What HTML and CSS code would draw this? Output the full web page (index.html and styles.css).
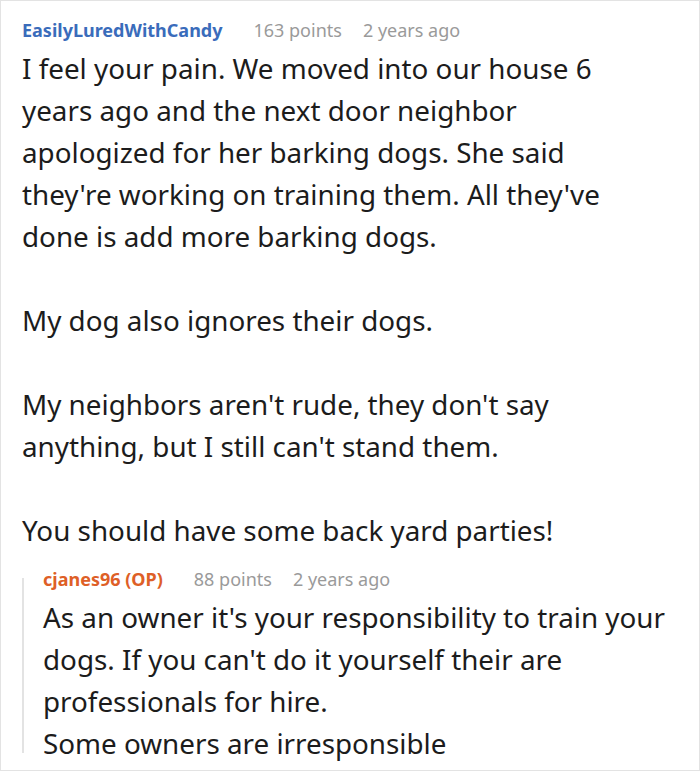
FILE: index.html
```html
<!DOCTYPE html>
<html lang="en">
<head>
  <meta charset="UTF-8" />
  <title>Comments</title>
  <link rel="stylesheet" href="styles.css">
</head>
<body>
  <div class="thread">
    <div class="comment">
      <div class="meta">
        <span class="author">EasilyLuredWithCandy</span>
        <span class="points">163 points</span>
        <span class="age">2 years ago</span>
      </div>
      <div class="body">
        <p>I feel your pain. We moved into our house 6 years ago and the next door neighbor apologized for her barking dogs. She said they're working on training them. All they've done is add more barking dogs.</p>
        <p>My dog also ignores their dogs.</p>
        <p>My neighbors aren't rude, they don't say anything, but I still can't stand them.</p>
        <p>You should have some back yard parties!</p>
      </div>

      <!-- reply from the original poster -->
      <div class="reply">
        <div class="meta">
          <span class="author op">cjanes96 (OP)</span>
          <span class="points">88 points</span>
          <span class="age">2 years ago</span>
        </div>
        <div class="body">
          As an owner it's your responsibility to train your dogs. If you can't do it yourself their are professionals for hire.<br>
          Some owners are irresponsible
        </div>
      </div>
    </div>
  </div>
</body>
</html>
```

FILE: styles.css
```css
:root {
  --border: #e3e3e3;
  --text: #1c1c1c;
  --muted: #9a9a9a;
  --blue: #3a6cbb;
  --orange: #de5f27;
}
*, *::before, *::after { box-sizing: border-box; }
html, body { margin: 0; padding: 0; background: #fff; }
body { font-family: 'Noto Sans', 'Open Sans', sans-serif; color: var(--text); }

.thread {
  width: 700px; height: 771px; overflow: hidden;
  border: 1px solid var(--border);
}
.comment { padding: 17px 38px 0 21px; }

.meta { display: flex; align-items: center; height: 24px; font-size: 18px; }
.meta .author { font-weight: 700; color: var(--blue); margin-right: 31px; }
.meta .author.op { color: var(--orange); margin-right: 31px; }
.meta .points { color: var(--muted); margin-right: 21px; }
.meta .age { color: var(--muted); }

.body { margin-top: 5px; font-size: 27.8px; line-height: 42px; }
.body p { margin: 0 0 42px; }
.body p:last-child { margin-bottom: 0; }

.reply { position: relative; margin: 16px -12px 0 0; padding-left: 21px; }
.reply::before {
  content: ""; position: absolute; left: 0; top: 11px; bottom: 11px;
  width: 2px; background: var(--border);
}
.reply .body { margin-top: 5px; }
```
